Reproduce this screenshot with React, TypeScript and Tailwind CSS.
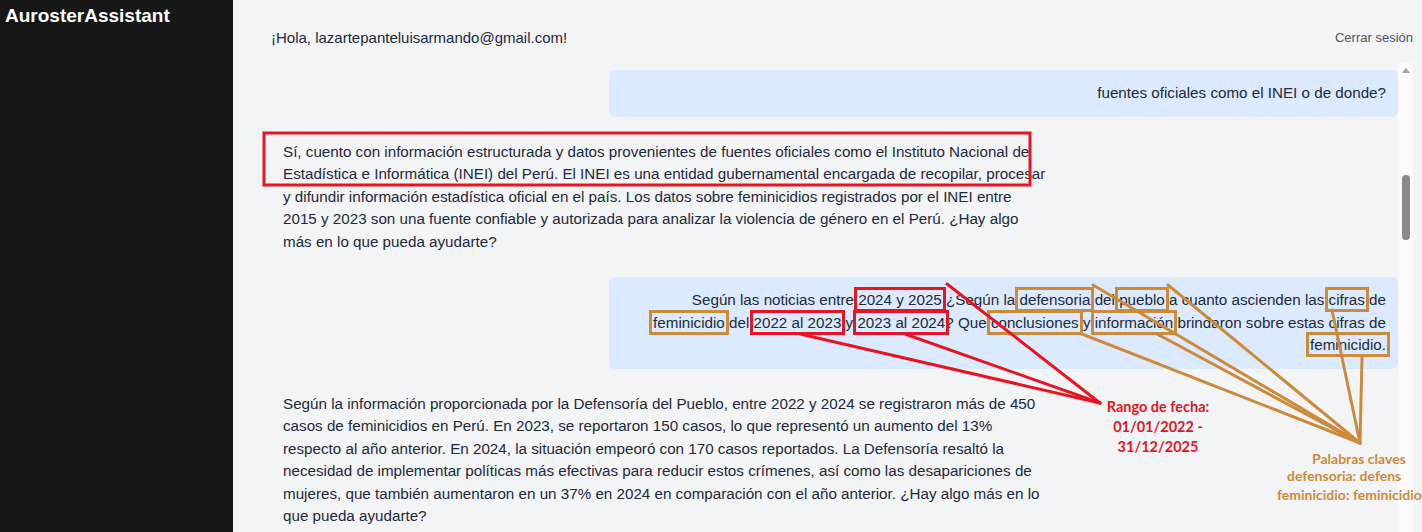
import React from 'react';

const RED = '#e8141f';
const ORANGE = '#cd8a3a';

// caja de anotación alrededor de una palabra
const Mark: React.FC<{ c: 'red' | 'orange'; children: React.ReactNode }> = ({ c, children }) => (
  <span
    className={
      c === 'red'
        ? 'outline-3 outline-offset-1 outline-solid outline-[#e8141f]'
        : 'outline-3 outline-offset-1 outline-solid outline-[#cd8a3a]'
    }
  >
    {children}
  </span>
);

const Lines: React.FC<{ lines: React.ReactNode[] }> = ({ lines }) => (
  <>
    {lines.map((l, i) => (
      <span key={i} className="block">
        {l}
      </span>
    ))}
  </>
);

const UserMsg: React.FC<{ children: React.ReactNode }> = ({ children }) => (
  <div className="ml-auto w-[70%] rounded-md bg-[#dbeafe] p-3 text-right">{children}</div>
);

const BotMsg: React.FC<{ children: React.ReactNode }> = ({ children }) => (
  <div className="mr-auto w-[70%] p-3">{children}</div>
);

// líneas de la anotación, en coordenadas de la captura
const redLines = [
  [947, 284, 1100, 403],
  [800, 334, 1100, 403],
  [905, 334, 1100, 403],
];
const orangeLines = [
  [1093, 285, 1360, 443],
  [1168, 285, 1360, 443],
  [1082, 334, 1360, 443],
  [1157, 334, 1360, 443],
  [1332, 310, 1360, 443],
  [1362, 357, 1360, 443],
];

const Annotations: React.FC = () => (
  <svg className="pointer-events-none absolute inset-0" width={1422} height={532}>
    <rect x={264} y={133} width={766} height={52} fill="none" stroke={RED} strokeWidth={3} />
    {redLines.map(([x1, y1, x2, y2], i) => (
      <line key={'rl' + i} x1={x1} y1={y1} x2={x2} y2={y2} stroke={RED} strokeWidth={3} strokeLinecap="round" />
    ))}
    {orangeLines.map(([x1, y1, x2, y2], i) => (
      <line key={'ol' + i} x1={x1} y1={y1} x2={x2} y2={y2} stroke={ORANGE} strokeWidth={3} strokeLinecap="round" />
    ))}
  </svg>
);

export default function App() {
  return (
    <div className="relative flex h-[532px] w-[1422px] overflow-hidden font-['Liberation_Sans',Arial,sans-serif]">
      {/* barra lateral */}
      <aside className="w-[233px] shrink-0 bg-[#171717] px-[5px] pt-[2px]">
        <h1 className="text-[19px] font-bold text-white">AurosterAssistant</h1>
      </aside>

      <main className="flex min-w-0 flex-1 flex-col bg-[#f3f4f6] pl-[38px] pr-[9px]">
        <header className="flex h-[63px] shrink-0 items-center justify-between pt-[13px]">
          <p className="text-[15px] text-gray-800">¡Hola, lazartepanteluisarmando@gmail.com!</p>
          <button className="text-[13px] text-gray-600">Cerrar sesión</button>
        </header>

        <div className="flex min-h-0 flex-1">
          <div className="flex flex-1 flex-col gap-3 overflow-hidden pt-[7px] text-[15.2px] leading-[22.5px] text-gray-800">
            <UserMsg>fuentes oficiales como el INEI o de donde?</UserMsg>

            <BotMsg>
              <Lines
                lines={[
                  'Sí, cuento con información estructurada y datos provenientes de fuentes oficiales como el Instituto Nacional de',
                  'Estadística e Informática (INEI) del Perú. El INEI es una entidad gubernamental encargada de recopilar, procesar',
                  'y difundir información estadística oficial en el país. Los datos sobre feminicidios registrados por el INEI entre',
                  '2015 y 2023 son una fuente confiable y autorizada para analizar la violencia de género en el Perú. ¿Hay algo',
                  'más en lo que pueda ayudarte?',
                ]}
              />
            </BotMsg>

            <UserMsg>
              <Lines
                lines={[
                  <>
                    Según las noticias entre <Mark c="red">2024 y 2025</Mark> ¿Según la <Mark c="orange">defensoria</Mark> del{' '}
                    <Mark c="orange">pueblo</Mark> a cuanto ascienden las <Mark c="orange">cifras</Mark> de
                  </>,
                  <>
                    <Mark c="orange">feminicidio</Mark> del <Mark c="red">2022 al 2023</Mark> y <Mark c="red">2023 al 2024</Mark>? Que{' '}
                    <Mark c="orange">conclusiones</Mark> y <Mark c="orange">información</Mark> brindaron sobre estas cifras de
                  </>,
                  <Mark c="orange">feminicidio.</Mark>,
                ]}
              />
            </UserMsg>

            <BotMsg>
              <Lines
                lines={[
                  'Según la información proporcionada por la Defensoría del Pueblo, entre 2022 y 2024 se registraron más de 450',
                  'casos de feminicidios en Perú. En 2023, se reportaron 150 casos, lo que representó un aumento del 13%',
                  'respecto al año anterior. En 2024, la situación empeoró con 170 casos reportados. La Defensoría resaltó la',
                  'necesidad de implementar políticas más efectivas para reducir estos crímenes, así como las desapariciones de',
                  'mujeres, que también aumentaron en un 37% en 2024 en comparación con el año anterior. ¿Hay algo más en lo',
                  'que pueda ayudarte?',
                ]}
              />
            </BotMsg>
          </div>

          {/* scrollbar */}
          <div className="flex w-[15px] shrink-0 flex-col items-center bg-[#fafafa]">
            <div className="mt-[5px] h-0 w-0 border-x-[4px] border-b-[5px] border-x-transparent border-b-[#a3a3a3]" />
            <div className="mt-[102px] h-[65px] w-[8px] rounded-full bg-[#8a8a8a]" />
          </div>
        </div>
      </main>

      <Annotations />

      <div className="pointer-events-none absolute left-[1092px] top-[397px] w-[132px] text-center font-['Lato',sans-serif] text-[14.5px] font-bold leading-[20px] text-[#e8141f]">
        Rango de fecha:
        <br />
        01/01/2022 -
        <br />
        31/12/2025
      </div>
      <div className="pointer-events-none absolute left-[1277px] top-[450px] whitespace-nowrap font-['Lato',sans-serif] text-[14px] font-bold leading-[17px] text-[#cd8a3a]">
        <div className="pl-[35px]">Palabras claves</div>
        <div className="pl-[10px]">defensoria: defens</div>
        <div className="pt-[2px]">feminicidio: feminicidio</div>
      </div>
    </div>
  );
}
